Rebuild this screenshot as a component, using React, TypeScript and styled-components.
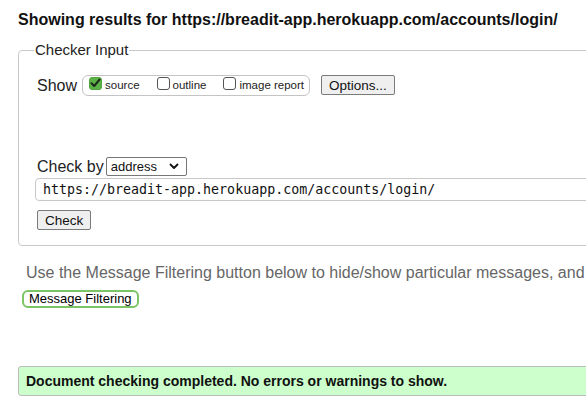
import React from "react";
import styled, { createGlobalStyle } from "styled-components";

const GlobalStyle = createGlobalStyle`
    html, body {
        margin: 0;
        padding: 0;
        background: #fff;
        overflow: hidden;
    }
    body {
        font-family: "Liberation Sans", Arial, Helvetica, sans-serif;
        color: #222;
    }
`;

export default function App() {
    const [source, setSource] = React.useState(true);
    const [outline, setOutline] = React.useState(false);
    const [report, setReport] = React.useState(false);
    const [url, setUrl] = React.useState("https://breadit-app.herokuapp.com/accounts/login/");

    return (
        <>
            <GlobalStyle />
            <Page>
                <Heading>Showing results for https://breadit-app.herokuapp.com/accounts/login/</Heading>

                <Fieldset>
                    <Legend>Checker Input</Legend>
                    <ShowRow>
                        <Label>Show</Label>
                        <OptionGroup>
                            <Option onClick={() => setSource(!source)}>
                                <Box checked={source}>
                                    {source && (
                                        <svg width="11" height="10" viewBox="0 0 11 10">
                                            <path d="M1.5 5.2 L4.2 8 L9.6 1.5" fill="none" stroke="#1c2a18" strokeWidth="2" strokeLinecap="round" strokeLinejoin="round" />
                                        </svg>
                                    )}
                                </Box>
                                source
                            </Option>
                            <Option onClick={() => setOutline(!outline)}>
                                <Box checked={outline} />
                                outline
                            </Option>
                            <Option onClick={() => setReport(!report)}>
                                <Box checked={report} />
                                image report
                            </Option>
                        </OptionGroup>
                        <Button>Options...</Button>
                    </ShowRow>

                    <CheckByRow>
                        <Label>Check by</Label>
                        <Select>
                            address
                            <svg width="10" height="7" viewBox="0 0 10 7">
                                <path d="M1.5 1.5 L5 5 L8.5 1.5" fill="none" stroke="#111" strokeWidth="1.8" strokeLinecap="round" strokeLinejoin="round" />
                            </svg>
                        </Select>
                    </CheckByRow>
                    <UrlInput value={url} onChange={e => setUrl(e.target.value)} />
                    <Button>Check</Button>
                </Fieldset>

                <Note>Use the Message Filtering button below to hide/show particular messages, and</Note>
                <FilterButton>Message Filtering</FilterButton>

                <Success>Document checking completed. No errors or warnings to show.</Success>
            </Page>
        </>
    );
}

const Page = styled.div`
    width: 760px;
    padding: 10px 0 0 18px;
`;

const Heading = styled.h2`
    margin: 0;
    font-size: 16px;
    line-height: 20px;
    font-weight: bold;
    color: #111;
    white-space: nowrap;
`;

const Fieldset = styled.fieldset`
    margin: 11px 0 0 0;
    padding: 0 0 15px 18px;
    border: 1px solid #c8c8c8;
    border-radius: 4px;
    display: flex;
    flex-direction: column;
    align-items: flex-start;
`;

const Legend = styled.legend`
    margin-left: -3px;
    padding: 0 1px;
    font-size: 15px;
    line-height: 18px;
    color: #222;
`;

const ShowRow = styled.div`
    display: flex;
    align-items: center;
    margin-top: 15px;
    height: 22px;
`;

const Label = styled.span`
    font-size: 16px;
    line-height: 19px;
    color: #222;
    margin-right: 5px;
`;

const OptionGroup = styled.div`
    display: flex;
    align-items: center;
    gap: 17px;
    height: 21px;
    width: 228px;
    box-sizing: border-box;
    padding: 0 0 0 6px;
    border: 1px solid #c4c4c4;
    border-radius: 6px;
    margin-right: 11px;
`;

const Option = styled.label`
    display: flex;
    align-items: center;
    gap: 3px;
    font-size: 11.5px;
    color: #222;
    cursor: pointer;
`;

const Box = styled.span<{ checked: boolean }>`
    width: 13px;
    height: 13px;
    box-sizing: border-box;
    border-radius: 3px;
    border: 1px solid ${props => props.checked ? "#53a63f" : "#555"};
    background: ${props => props.checked ? "#5bb348" : "#fff"};
    display: flex;
    align-items: center;
    justify-content: center;
    margin-top: -4px;
`;

const Button = styled.button`
    font-family: "Liberation Sans", Arial, sans-serif;
    font-size: 13.5px;
    height: 20px;
    padding: 0 7px;
    background: #efefef;
    border: 1px solid #7a7a7a;
    border-radius: 2px;
    color: #111;
`;

const CheckByRow = styled.div`
    display: flex;
    align-items: center;
    margin-top: 61px;
`;

const Select = styled.div`
    display: flex;
    align-items: center;
    justify-content: space-between;
    width: 81px;
    height: 19px;
    box-sizing: border-box;
    padding: 0 7px 0 4px;
    border: 1px solid #767676;
    border-radius: 2px;
    font-size: 13px;
    color: #111;
    margin-left: -3px;
`;

const UrlInput = styled.input`
    margin: 2px 0 9px -2px;
    width: 700px;
    height: 23px;
    box-sizing: border-box;
    padding: 0 7px;
    border: 1px solid #c8c8c8;
    border-radius: 4px;
    font-family: "DejaVu Sans Mono", monospace;
    font-size: 13.3px;
    color: #111;
    outline: none;
`;

const Note = styled.p`
    margin: 17px 0 0 8px;
    font-size: 16px;
    line-height: 19px;
    color: #666;
    white-space: nowrap;
`;

const FilterButton = styled.button`
    margin: 8px 0 0 4px;
    height: 18px;
    padding: 0 5px;
    background: #fff;
    border: 2px solid #7cc564;
    border-radius: 6px;
    font-family: "Liberation Sans", Arial, sans-serif;
    font-size: 13px;
    color: #000;
    line-height: 14px;
`;

const Success = styled.div`
    margin-top: 58px;
    height: 30px;
    box-sizing: border-box;
    padding: 0 7px;
    display: flex;
    align-items: center;
    background: #ccffcc;
    border: 1px solid #bcbcbc;
    border-radius: 3px;
    font-size: 14px;
    font-weight: bold;
    color: #111;
`;
